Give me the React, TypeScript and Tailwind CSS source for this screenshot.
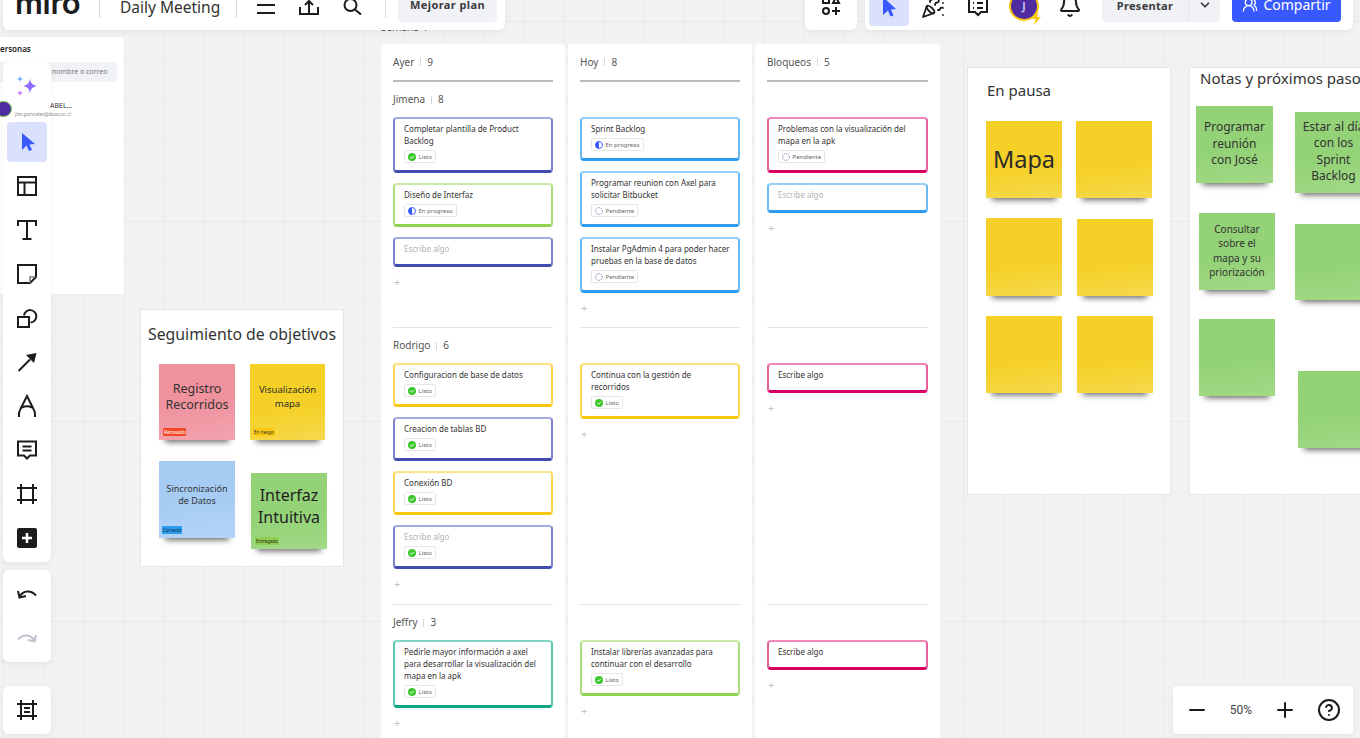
import React from "react";
import { Bell, ChevronDown, CircleHelp, Minus, PartyPopper, Plus, UsersRound } from "lucide-react";

type Tone = "indigo" | "green" | "blue" | "pink" | "yellow" | "teal";
type Status = "listo" | "progreso" | "pendiente";

const tones: Record<Tone, string> = {
  indigo: "border-[#7d83cf] border-t-[#a6abe0] border-b-[#414bb2]",
  green: "border-[#aedd80] border-t-[#c8e9a9] border-b-[#8fd14f]",
  blue: "border-[#6cbaf5] border-t-[#96cff9] border-b-[#2d9bf0]",
  pink: "border-[#e85f9c] border-t-[#ee86b6] border-b-[#da0063]",
  yellow: "border-[#fcd64f] border-t-[#fde385] border-b-[#fac710]",
  teal: "border-[#5cc5ae] border-t-[#85d4c3] border-b-[#0ca789]",
};

function StatusChip({ status }: { status: Status }) {
  const label = status === "listo" ? "Listo" : status === "progreso" ? "En progreso" : "Pendiente";
  return (
    <div className="mt-[3px] flex h-[13px] w-fit items-center gap-[3px] rounded-[1.5px] border border-[#e6e6e6] pl-[2.5px] pr-[3px] text-[6px] leading-none text-[#666]">
      <svg width="8" height="8" viewBox="0 0 8 8">
        {status === "listo" && (
          <>
            <circle cx="4" cy="4" r="4" fill="#3cc82d" />
            <path d="M2.2 4.1 3.5 5.3 5.8 2.9" fill="none" stroke="#fff" strokeWidth="1" />
          </>
        )}
        {status === "progreso" && (
          <>
            <circle cx="4" cy="4" r="3.5" fill="#fff" stroke="#3859ff" strokeWidth="0.9" />
            <path d="M4 0.5a3.5 3.5 0 0 0 0 7z" fill="#3859ff" />
          </>
        )}
        {status === "pendiente" && (
          <circle cx="4" cy="4" r="3.4" fill="none" stroke="#4a4f8f" strokeWidth="0.7" strokeDasharray="1.2 1" />
        )}
      </svg>
      <span>{label}</span>
    </div>
  );
}

function Card({ tone, text, status, muted }: { tone: Tone; text: string; status?: Status; muted?: boolean }) {
  return (
    <div
      className={`rounded-[4px] border-2 border-b-[3px] bg-white pl-[9px] pr-[8px] pt-[4px] ${status ? "pb-[7px]" : "pb-[9px]"} ${tones[tone]}`}
    >
      <p className={`text-[8px] leading-[12px] ${muted ? "text-[#b4b4b4]" : "text-[#333]"}`}>{text}</p>
      {status && <StatusChip status={status} />}
    </div>
  );
}

function AddMark() {
  return <div className="mt-[8px] pl-[1px] text-[11px] leading-[14px] text-[#c4c4c4]">+</div>;
}

function Section({
  title,
  count,
  heightClass,
  divider,
  children,
}: {
  title?: string;
  count?: number;
  heightClass: string;
  divider?: boolean;
  children: React.ReactNode;
}) {
  return (
    <section className={`${heightClass} ${divider ? "border-b border-[#e4e4e4]" : ""}`}>
      <div className="flex h-[35px] items-center text-[10px] text-[#555]">
        {title && (
          <>
            <span>{title}</span>
            <span className="mx-[6px] h-[8px] w-px bg-[#d8d8d8]" />
            <span>{count}</span>
          </>
        )}
      </div>
      <div className="flex flex-col gap-[10px]">{children}</div>
      <AddMark />
    </section>
  );
}

function Column({ title, count, className, sections }: { title: string; count: number; className: string; sections: React.ReactNode }) {
  return (
    <div className={`absolute top-[44px] h-[700px] rounded-[4px] bg-white px-[12px] ${className}`}>
      <div className="flex h-[38px] items-center border-b-2 border-[#bbbbbb] text-[10px] text-[#555]">
        <span>{title}</span>
        <span className="mx-[6px] h-[8px] w-px bg-[#d8d8d8]" />
        <span>{count}</span>
      </div>
      {sections}
    </div>
  );
}

function Sticky({ className, tone, children }: { className: string; tone: string; children?: React.ReactNode }) {
  return (
    <div
      className={`absolute flex items-center justify-center text-center shadow-[0_8px_6px_-6px_rgba(0,0,0,0.6)] ${tone} ${className}`}
    >
      {children}
    </div>
  );
}

const yellow = "bg-[linear-gradient(172deg,#f5d128_60%,#f6d84c_100%)] text-[#2b2b2b]";
const greenNote = "bg-[linear-gradient(172deg,#93d277_55%,#a2d986_100%)] text-[#333]";
const pinkNote = "bg-[linear-gradient(172deg,#ef929e_50%,#f2a3ae_100%)] text-[#333]";
const blueNote = "bg-[linear-gradient(172deg,#a6ccf4_50%,#b3d4f8_100%)] text-[#333]";

function Tag({ className, text }: { className: string; text: string }) {
  return <span className={`absolute h-[8px] rounded-[1px] px-[1px] text-[4.5px] leading-[8px] ${className}`}>{text}</span>;
}

function Tool({ children, className = "" }: { children: React.ReactNode; className?: string }) {
  return <div className={`flex h-[44px] w-[48px] items-center justify-center ${className}`}>{children}</div>;
}

function Svg({ children, color = "#1c1c1e", width = 2 }: { children: React.ReactNode; color?: string; width?: number }) {
  return (
    <svg width="24" height="24" viewBox="0 0 24 24" fill="none" stroke={color} strokeWidth={width} className="block">
      {children}
    </svg>
  );
}

const Sep = ({ className }: { className: string }) => <span className={`mt-[6px] h-[36px] w-px self-start bg-[#d9d9de] ${className}`} />;

export default function App() {
  return (
    <div className="relative h-[738px] w-[1360px] overflow-hidden bg-[#f2f2f2] bg-[image:linear-gradient(to_right,#e8e8e8_1px,transparent_1px),linear-gradient(#e8e8e8_1px,transparent_1px),linear-gradient(to_right,#ececec_1px,transparent_1px),linear-gradient(#ececec_1px,transparent_1px)] bg-[size:200px_200px,200px_200px,40px_40px,40px_40px] bg-[position:163px_21px,163px_21px,3px_21px,3px_21px] font-['Noto_Sans',sans-serif]">
      {/* Panel de personas */}
      <div className="absolute left-0 top-[37px] h-[258px] w-[125px] rounded-r-[2px] border-b border-r border-[#ececec] bg-white">
        <div className="-ml-[5px] mt-[6px] text-[8px] font-semibold leading-[12px] text-[#222]">personas</div>
        <div className="mt-[7px] flex h-[20px] w-[117px] items-center rounded-r-[2px] bg-[#f1f2f5] pl-[52px] text-[7px] text-[#777]">nombre o correo</div>
      </div>

      {/* Semana */}
      <div className="absolute left-[381px] top-[21px] text-[10px] leading-[13px] text-[#555]">Semana 4</div>

      {/* Columnas */}
      <Column
        title="Ayer"
        count={9}
        className="left-[381px] w-[184px]"
        sections={
          <>
            <Section title="Jimena" count={8} heightClass="h-[246px]" divider>
              <Card tone="indigo" text="Completar plantilla de Product Backlog" status="listo" />
              <Card tone="green" text="Diseño de Interfaz" status="progreso" />
              <Card tone="indigo" text="Escribe algo" muted />
            </Section>
            <Section title="Rodrigo" count={6} heightClass="h-[277px]" divider>
              <Card tone="yellow" text="Configuracion de base de datos" status="listo" />
              <Card tone="indigo" text="Creacion de tablas BD" status="listo" />
              <Card tone="yellow" text="Conexión BD" status="listo" />
              <Card tone="indigo" text="Escribe algo" status="listo" muted />
            </Section>
            <Section title="Jeffry" count={3} heightClass="h-[130px]">
              <Card tone="teal" text="Pedirle mayor información a axel para desarrollar la visualización del mapa en la apk" status="listo" />
            </Section>
          </>
        }
      />
      <Column
        title="Hoy"
        count={8}
        className="left-[568px] w-[184px]"
        sections={
          <>
            <Section heightClass="h-[246px]" divider>
              <Card tone="blue" text="Sprint Backlog" status="progreso" />
              <Card tone="blue" text="Programar reunion con Axel para solicitar Bitbucket" status="pendiente" />
              <Card tone="blue" text="Instalar PgAdmin 4 para poder hacer pruebas en la base de datos" status="pendiente" />
            </Section>
            <Section heightClass="h-[277px]" divider>
              <Card tone="yellow" text="Continua con la gestión de recorridos" status="listo" />
            </Section>
            <Section heightClass="h-[130px]">
              <Card tone="green" text="Instalar librerías avanzadas para continuar con el desarrollo" status="listo" />
            </Section>
          </>
        }
      />
      <Column
        title="Bloqueos"
        count={5}
        className="left-[755px] w-[185px]"
        sections={
          <>
            <Section heightClass="h-[246px]" divider>
              <Card tone="pink" text="Problemas con la visualización del mapa en la apk" status="pendiente" />
              <Card tone="blue" text="Escribe algo" muted />
            </Section>
            <Section heightClass="h-[277px]" divider>
              <Card tone="pink" text="Escribe algo" />
            </Section>
            <Section heightClass="h-[130px]">
              <Card tone="pink" text="Escribe algo" />
            </Section>
          </>
        }
      />

      {/* Seguimiento de objetivos */}
      <div className="absolute left-[140px] top-[309px] h-[258px] w-[204px] border border-[#e6e6e6] bg-white">
        <h2 className="mt-[12px] whitespace-nowrap text-center text-[15.8px] font-normal leading-[24px] text-[#333]">Seguimiento de objetivos</h2>
        <Sticky className="left-[18px] top-[54px] h-[76px] w-[76px] text-[12.5px] leading-[16px]" tone={pinkNote}>
          <span className="-mt-[10px]">Registro<br />Recorridos</span>
          <Tag className="left-[4px] top-[64px] bg-[#f24726] text-white" text="Retrasado" />
        </Sticky>
        <Sticky className="left-[109px] top-[54px] h-[76px] w-[75px] text-[9.5px] leading-[14px]" tone={yellow}>
          <span className="-mt-[10px]">Visualización<br />mapa</span>
          <Tag className="left-[3px] top-[64px] bg-[#fac710] text-[#333]" text="En riesgo" />
        </Sticky>
        <Sticky className="left-[18px] top-[151px] h-[77px] w-[76px] text-[9px] leading-[12px]" tone={blueNote}>
          <span className="-mt-[10px]">Sincronización<br />de Datos</span>
          <Tag className="left-[3px] top-[65px] bg-[#2d9bf0] text-[#123]" text="Correcto" />
        </Sticky>
        <Sticky className="left-[110px] top-[163px] h-[76px] w-[76px] text-[16px] leading-[22px]" tone={greenNote}>
          <span className="-mt-[10px] text-[#222]">Interfaz<br />Intuitiva</span>
          <Tag className="left-[4px] top-[64px] bg-[#8fd14f] text-[#222]" text="Entregado" />
        </Sticky>
      </div>

      {/* En pausa */}
      <div className="absolute left-[967px] top-[67px] h-[428px] w-[204px] border border-[#e6e6e6] bg-white">
        <h2 className="ml-[19px] mt-[11px] text-[15px] font-normal leading-[22px] text-[#333]">En pausa</h2>
        <Sticky className="left-[18px] top-[53px] h-[77px] w-[76px] text-[23.5px]" tone={yellow}>
          <span>Mapa</span>
        </Sticky>
        <Sticky className="left-[108px] top-[53px] h-[77px] w-[76px]" tone={yellow} />
        <Sticky className="left-[18px] top-[150px] h-[78px] w-[76px]" tone={yellow} />
        <Sticky className="left-[109px] top-[151px] h-[77px] w-[76px]" tone={yellow} />
        <Sticky className="left-[18px] top-[248px] h-[77px] w-[76px]" tone={yellow} />
        <Sticky className="left-[109px] top-[248px] h-[77px] w-[76px]" tone={yellow} />
      </div>

      {/* Notas */}
      <div className="absolute left-[1189px] top-[67px] h-[428px] w-[220px] border border-[#e6e6e6] bg-white">
        <h2 className="ml-[10px] whitespace-nowrap text-[15px] font-normal leading-[21px] text-[#333]">Notas y próximos pasos</h2>
        <Sticky className="left-[6px] top-[38px] h-[77px] w-[77px] text-[12px] leading-[16.5px]" tone={greenNote}>
          <span className="-mt-[1px]">Programar<br />reunión<br />con José</span>
        </Sticky>
        <Sticky className="left-[105px] top-[44px] h-[81px] w-[77px] text-[12px] leading-[16.5px]" tone={greenNote}>
          <span className="-mt-[2px]">Estar al día<br />con los<br />Sprint<br />Backlog</span>
        </Sticky>
        <Sticky className="left-[9px] top-[145px] h-[77px] w-[76px] text-[10px] leading-[14.5px]" tone={greenNote}>
          <span className="-mt-[2px]">Consultar<br />sobre el<br />mapa y su<br />priorización</span>
        </Sticky>
        <Sticky className="left-[105px] top-[156px] h-[76px] w-[77px]" tone={greenNote} />
        <Sticky className="left-[9px] top-[251px] h-[77px] w-[76px]" tone={greenNote} />
        <Sticky className="left-[108px] top-[303px] h-[77px] w-[77px]" tone={greenNote} />
      </div>

      {/* Barra superior izquierda */}
      <header className="absolute left-[3px] top-[-24px] flex h-[54px] w-[502px] items-center rounded-[6px] bg-white pl-[12px] text-[#1c1c1e] shadow-[0_2px_6px_rgba(0,0,0,0.06)]">
        <span className="w-[65px] font-['Inter',sans-serif] text-[31px] font-semibold tracking-[-0.3px]">miro</span>
        <Sep className="ml-[19px]" />
        <span className="ml-[20px] mt-[7px] w-[116px] text-[15.500px] leading-[20px] text-[#333]">Daily Meeting</span>
        <Sep className="" />
        <span className="ml-[17px] flex">
          <Svg>
            <path d="M3 14h18M3 22h18" />
          </Svg>
        </span>
        <span className="ml-[19px] flex">
          <Svg>
            <path d="M12 23V10M8 14l4-4 4 4M3 16v7h18v-7" />
          </Svg>
        </span>
        <span className="ml-[19px] flex">
          <Svg>
            <circle cx="10.5" cy="14" r="6" />
            <path d="M15 18.500l6 5" />
          </Svg>
        </span>
        <Sep className="ml-[21px]" />
        <button className="ml-[12px] mt-[8px] flex h-[38px] w-[99px] items-center justify-center self-start rounded-[4px] bg-[#f1f2f5] text-[11px] font-bold tracking-[0.4px] text-[#3a3a3f]">
          <span className="mt-[5px]">Mejorar plan</span>
        </button>
      </header>

      {/* Barra superior derecha */}
      <div className="absolute left-[805px] top-[-24px] flex h-[54px] w-[52px] items-center justify-center rounded-[6px] bg-white shadow-[0_2px_6px_rgba(0,0,0,0.06)]">
        <Svg>
          <path d="M4 6h6v6H4zM17 6l3 6h-6z" />
          <circle cx="7" cy="20" r="3" />
          <path d="M17 16v8M13 20h8" />
        </Svg>
      </div>
      <div className="absolute left-[865px] top-[-24px] flex h-[54px] w-[488px] items-center rounded-[6px] bg-white text-[#1c1c1e] shadow-[0_2px_6px_rgba(0,0,0,0.06)]">
        <div className="ml-[4px] flex h-[50px] w-[40px] items-center justify-center self-start rounded-[4px] bg-[#dbe0fd]">
          <svg width="24" height="24" viewBox="0 0 24 24" className="mt-[14px]">
            <path d="M6 1 19 13l-5 .5 2.5 6-3 1-2.500-6L6 19z" fill="#3859ff" />
            <path d="M15 3h6" stroke="#3859ff" strokeWidth="1.500" />
          </svg>
        </div>
        <span className="ml-[12px] mt-[8px] flex"><PartyPopper size={24} strokeWidth={1.8} /></span>
        <span className="ml-[21px] mt-[14px] flex">
          <Svg>
            <path d="M3 -2h18v16h-6l-3 3-3-3H3zM7 5h1M11 5h6M7 10h1M11 10h6" />
          </Svg>
        </span>
        <div className="relative ml-[19px] mt-[6px] flex h-[30px] w-[30px] items-center justify-center rounded-full border-[2px] border-[#fac710] bg-[#4f2da0] text-[11px] font-semibold text-[#d9cdf5]">
          J
          <svg width="11" height="14" viewBox="0 0 11 14" className="absolute -bottom-[6px] -right-[5px]">
            <path d="M7 0 1 8h3.500L3 14l7-8H6.500z" fill="#fac710" />
          </svg>
        </div>
        <span className="ml-[19px] mt-[6px] flex"><Bell size={24} strokeWidth={2} /></span>
        <div className="ml-[20px] flex h-[46px] w-[118px] items-end self-start rounded-[4px] bg-[#f1f2f5] text-[11px] font-bold tracking-[0.300px] text-[#3a3a3f]">
          <span className="flex h-[28px] w-[86px] justify-center pt-[4px]">Presentar</span>
          <span className="flex h-[46px] flex-1 items-end justify-center border-l border-[#e4e5ea] pb-[10px]">
            <ChevronDown size={14} strokeWidth={3} />
          </span>
        </div>
        <button className="ml-[12px] flex h-[46px] w-[109px] items-end justify-center gap-[5px] self-start rounded-[4px] bg-[#3859ff] pb-[8px] text-[14px] leading-[18px] text-white">
          <UsersRound size={16} strokeWidth={2} className="mb-[1px]" />
          <span>Compartir</span>
        </button>
      </div>

      {/* Barra lateral */}
      <aside className="absolute left-[3px] top-[62px] flex h-[500px] w-[48px] flex-col items-center rounded-[6px] bg-white pt-[2px] shadow-[0_2px_6px_rgba(0,0,0,0.06)]">
        <Tool>
          <svg width="24" height="24" viewBox="0 0 24 24">
            <path d="M15 4.500c.7 4.500 2 6.500 7 7.500-5 1-6.300 3-7 7.500-.7-4.500-2-6.500-7-7.500 5-1 6.300-3 7-7.500z" fill="#8f6cff" />
            <path d="M5 1.500c.3 2.300.9 3 3.300 3.500-2.400.5-3 1.200-3.300 3.500-.3-2.300-.9-3-3.300-3.500 2.400-.5 3-1.200 3.300-3.500z" fill="#6cb0ff" />
            <path d="M5 15.500c.3 2.300.9 3 3.300 3.500-2.400.5-3 1.200-3.300 3.500-.3-2.300-.9-3-3.300-3.500 2.400-.5 3-1.200 3.300-3.500z" fill="#cb7ff5" />
          </svg>
        </Tool>
        <div className="mt-[14px] flex h-[40px] w-[40px] items-center justify-center rounded-[4px] bg-[#dbe0fd]">
          <svg width="24" height="24" viewBox="0 0 24 24">
            <path d="M7 3 20 14l-5.500.5 2.500 5.500-3 1-2.500-5.500L7 20z" fill="#3859ff" />
          </svg>
        </div>
        <Tool className="mt-[2px]">
          <Svg><path d="M3 3h18v18H3zM3 8.500h18M9.500 8.500V21" /></Svg>
        </Tool>
        <Tool>
          <Svg><path d="M3 8V3h18v5M12 3v18M7.500 21h9" /></Svg>
        </Tool>
        <Tool>
          <Svg><path d="M3 3h18v12l-6 6H3z" /><path d="M20.500 15H15v6" stroke="#777" strokeWidth="1.500" /></Svg>
        </Tool>
        <Tool>
          <Svg><path d="M3 11h11v10H3z" /><path d="M9 9.500a6.200 6.200 0 1 1 6.500 7" /></Svg>
        </Tool>
        <Tool>
          <svg width="24" height="24" viewBox="0 0 24 24" fill="none">
            <path d="M3.500 21 15 9.500" stroke="#1c1c1e" strokeWidth="2" />
            <path d="M21.500 3 19 13l-8-8z" fill="#1c1c1e" />
          </svg>
        </Tool>
        <Tool>
          <Svg><path d="M4 23v-3c0-2.500 1-4 2-6l6-12 6 12c1 2 2 3.500 2 6v3M7 13.500c3-1.500 7-1.500 10 0" /></Svg>
        </Tool>
        <Tool>
          <Svg><path d="M3 3.500h18v14h-6l-3 3-3-3H3zM7.500 8.500h9M7.500 12.500h9" /></Svg>
        </Tool>
        <Tool>
          <Svg><path d="M6 2v20M18 2v20M2 6h20M2 18h20" /></Svg>
        </Tool>
        <Tool>
          <svg width="24" height="24" viewBox="0 0 24 24">
            <rect x="2" y="2" width="20" height="20" rx="2" fill="#1c1c1e" />
            <path d="M12 7v10M7 12h10" stroke="#fff" strokeWidth="2.500" />
          </svg>
        </Tool>
      </aside>

      {/* Fila de usuario, por encima de la barra lateral */}
      <div className="absolute left-0 top-[101px] flex h-[18px] items-start">
        <div className="-ml-[5px] h-[16px] w-[17px] rounded-full border border-[#7fd14f] bg-[#4f2da0]" />
        <div className="ml-[3px]">
          <div className="ml-[34px] bg-white pl-[1px] text-[7px] leading-[9px] text-[#333]">ABEL...</div>
          <div className="whitespace-nowrap text-[5px] leading-[8px] text-[#888]">jim.gonzalez@duocuc.cl</div>
        </div>
      </div>

      <div className="absolute left-[3px] top-[570px] flex h-[92px] w-[48px] flex-col items-center justify-center rounded-[6px] bg-white shadow-[0_2px_6px_rgba(0,0,0,0.06)]">
        <Tool>
          <Svg><path d="M5 14c3-5.500 11-6.500 16-.5" /><path d="M3 9l1.500 6.500L11 14" /></Svg>
        </Tool>
        <Tool>
          <Svg color="#c0c2d0"><path d="M19 14c-3-5.500-11-6.500-16-.5" /><path d="M21 9l-1.500 6.500L13 14" /></Svg>
        </Tool>
      </div>
      <div className="absolute left-[3px] top-[686px] flex h-[48px] w-[48px] items-center justify-center rounded-[6px] bg-white shadow-[0_2px_6px_rgba(0,0,0,0.06)]">
        <Svg><path d="M6 2v20M18 2v20M2 6h20M2 18h20M9 10h6M9 14h6" /></Svg>
      </div>

      {/* Zoom */}
      <div className="absolute left-[1173px] top-[686px] flex h-[48px] w-[180px] items-center rounded-[4px] bg-white pl-[12px] text-[#1c1c1e] shadow-[0_2px_6px_rgba(0,0,0,0.06)]">
        <Minus size={24} strokeWidth={2} />
        <span className="w-[64px] text-center font-['Roboto',sans-serif] text-[12px] text-[#444]">50%</span>
        <Plus size={24} strokeWidth={2} />
        <CircleHelp size={24} strokeWidth={2} className="ml-[20px]" />
      </div>
    </div>
  );
}
